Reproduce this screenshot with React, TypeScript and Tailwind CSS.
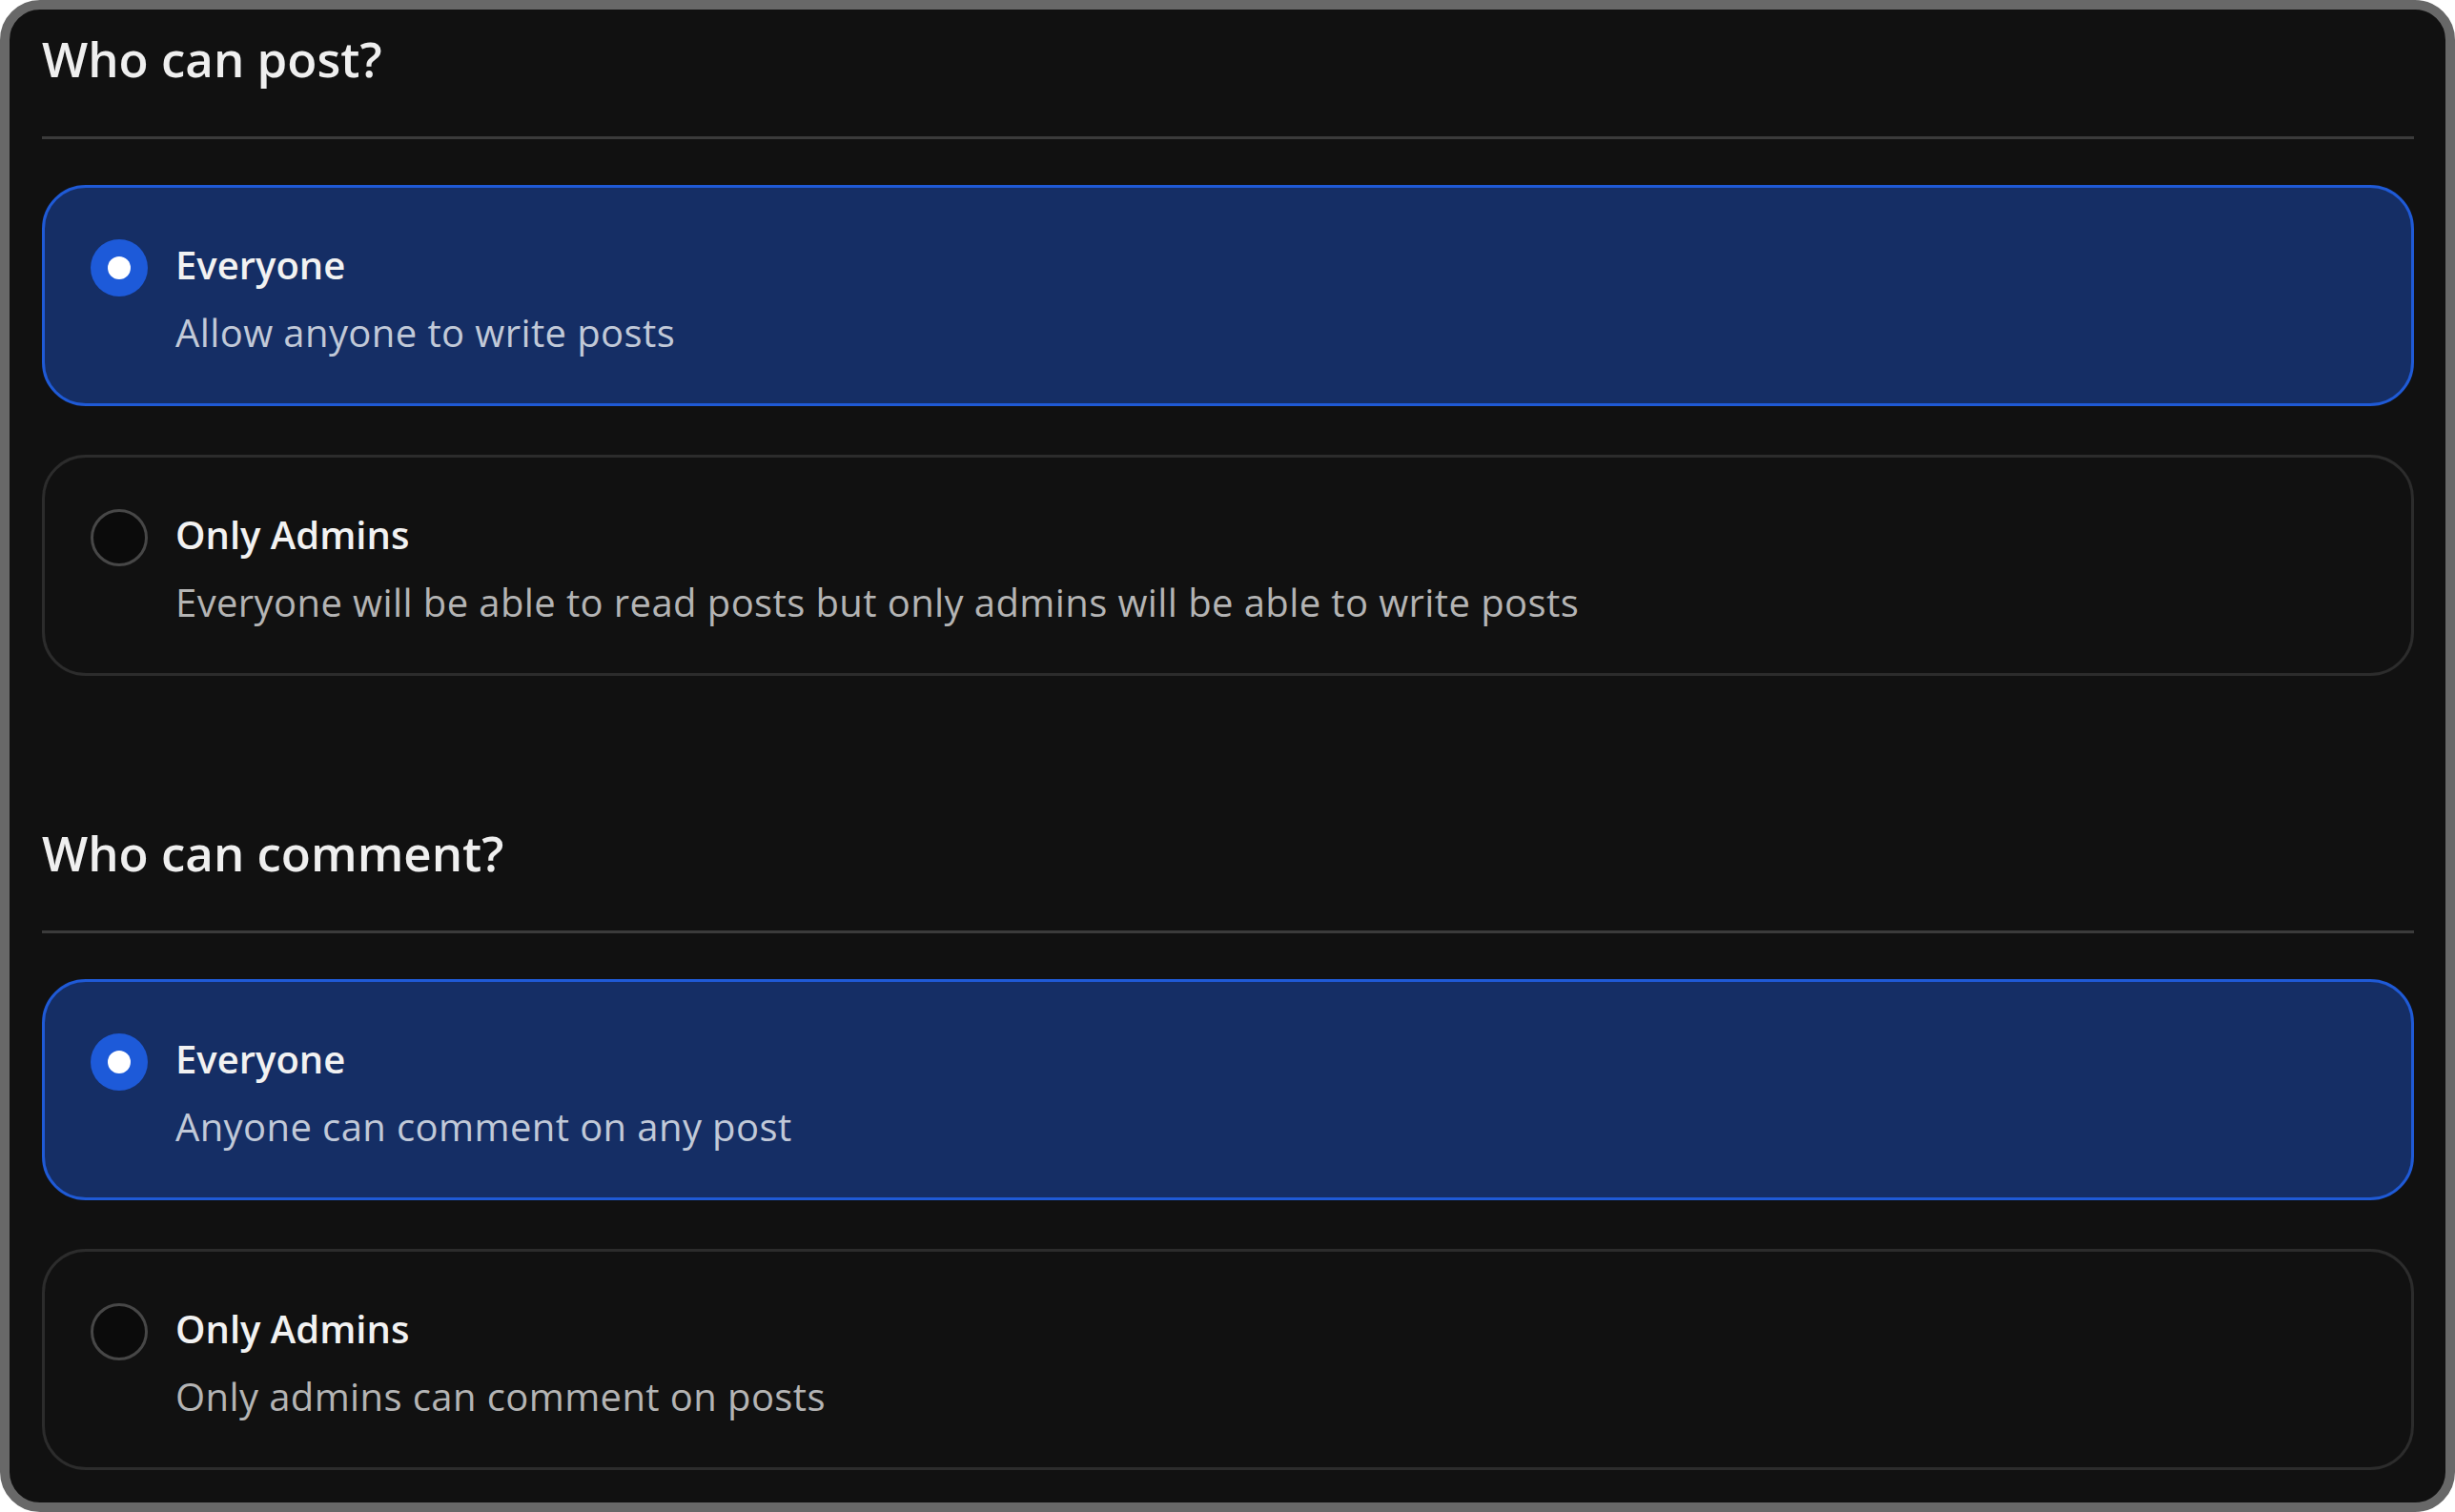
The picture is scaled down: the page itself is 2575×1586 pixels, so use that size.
import React from "react";

type Option = {
  title: string;
  description: string;
  selected: boolean;
};

const postOptions: Option[] = [
  { title: "Everyone", description: "Allow anyone to write posts", selected: true },
  {
    title: "Only Admins",
    description: "Everyone will be able to read posts but only admins will be able to write posts",
    selected: false,
  },
];

const commentOptions: Option[] = [
  { title: "Everyone", description: "Anyone can comment on any post", selected: true },
  { title: "Only Admins", description: "Only admins can comment on posts", selected: false },
];

function Radio({ checked }: { checked: boolean }) {
  if (checked) {
    return (
      <span className="mt-[3px] flex h-[60px] w-[60px] shrink-0 items-center justify-center rounded-full bg-[#1d5ad9]">
        <span className="h-[24px] w-[24px] rounded-full bg-white" />
      </span>
    );
  }
  return (
    <span className="mt-[3px] h-[60px] w-[60px] shrink-0 rounded-full border-[3px] border-[#474747] bg-[#0b0b0b]" />
  );
}

function OptionCard({ option }: { option: Option }) {
  const { title, description, selected } = option;
  return (
    <div
      className={
        selected
          ? "flex h-[232px] gap-[29px] rounded-[46px] border-[3px] border-[#1f5ad6] bg-[#152e65] pl-[48px] pt-[51px]"
          : "flex h-[232px] gap-[29px] rounded-[46px] border-[3px] border-[#2c2c2c] bg-[#111111] pl-[48px] pt-[51px]"
      }
    >
      <Radio checked={selected} />
      <div className="flex flex-col">
        <span className="text-[40px] font-semibold leading-[60px] text-[#f2f2f2]">{title}</span>
        <span
          className={
            selected
              ? "mt-[11px] text-[40px] leading-[60px] tracking-[0.4px] text-[#c1c9d8]"
              : "mt-[11px] text-[40px] leading-[60px] tracking-[0.4px] text-[#b4b4b4]"
          }
        >
          {description}
        </span>
      </div>
    </div>
  );
}

function Section({ title, options }: { title: string; options: Option[] }) {
  return (
    <section>
      <h2 className="text-[51px] font-semibold leading-[68px] text-[#efefef]">{title}</h2>
      <div className="mt-[48px] h-[3px] bg-[#3b3b3b]" />
      <div className="mt-[48px] flex flex-col gap-[51px]">
        {options.map((o) => (
          <OptionCard key={o.title} option={o} />
        ))}
      </div>
    </section>
  );
}

export default function App() {
  return (
    <div className="min-h-screen bg-white" style={{ fontFamily: '"Open Sans", "Noto Sans", sans-serif' }}>
      <div className="h-[1586px] w-[2575px] overflow-hidden rounded-[42px] border-[10px] border-[#686868] bg-[#111111] pl-[34px] pr-[33px] pt-[17px]">
        <Section title="Who can post?" options={postOptions} />
        <div className="mt-[151px]">
          <Section title="Who can comment?" options={commentOptions} />
        </div>
      </div>
    </div>
  );
}
